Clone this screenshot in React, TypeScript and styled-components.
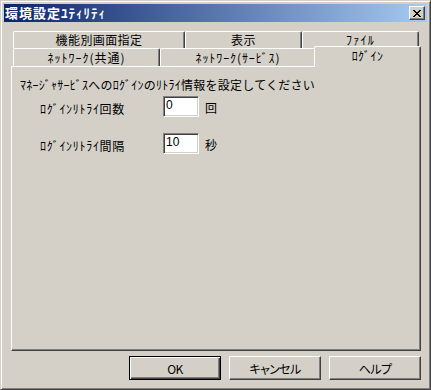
import React from "react";
import styled, { createGlobalStyle } from "styled-components";

const FACE = "#D4D0C8";
const SHADOW = "#808080";
const DARK = "#404040";

const GlobalStyle = createGlobalStyle`
  html, body {
    margin: 0;
    padding: 0;
    background: ${FACE};
  }
  body {
    font-family: "Noto Sans CJK JP", "Liberation Sans", sans-serif;
    font-size: 12px;
    color: #000;
  }
`;

// 半角カナはそのまま (元画面のまま)
const rowOne = [
    { label: "機能別画面指定", w: 172, ls: 0.4 },
    { label: "表示", w: 117, ls: 0.5 },
    { label: "ﾌｧｲﾙ", w: 117, ls: 1.2 },
];

const rowTwo = [
    { label: "ﾈｯﾄﾜｰｸ(共通)", w: 147, ls: 1 },
    { label: "ﾈｯﾄﾜｰｸ(ｻｰﾋﾞｽ)", w: 156, ls: 0.9 },
    { label: "ﾛｸﾞｲﾝ", w: 103, ls: 0.4, active: true },
];

const fields = [
    { label: "ﾛｸﾞｲﾝﾘﾄﾗｲ回数", value: "0", unit: "回" },
    { label: "ﾛｸﾞｲﾝﾘﾄﾗｲ間隔", value: "10", unit: "秒" },
];

const CloseGlyph = () => {
    // classic 8x7 pixel "x"
    const rows = ["xx....xx", ".xx..xx.", "..xxxx..", "...xx...", "..xxxx..", ".xx..xx.", "xx....xx"];
    return (
        <svg width="8" height="7" viewBox="0 0 8 7" shapeRendering="crispEdges">
            {rows.map((r, y) =>
                r.split("").map((c, x) =>
                    c === "x" ? <rect key={`${x}-${y}`} x={x} y={y} width="1" height="1" fill="#000" /> : null
                )
            )}
        </svg>
    );
};

const App = () => {
    return (
        <>
            <GlobalStyle />
            <Window>
                <TitleBar>
                    <Title>環境設定ﾕﾃｨﾘﾃｨ</Title>
                    <CloseButton>
                        <CloseGlyph />
                    </CloseButton>
                </TitleBar>
                <Body>
                    <TabStrip>
                        <TabRow $h={17}>
                            {rowOne.map((t) => (
                                <Tab key={t.label} $w={t.w} $ls={t.ls}>
                                    {t.label}
                                </Tab>
                            ))}
                        </TabRow>
                        <TabRow $h={18}>
                            {rowTwo.map((t) => (
                                <Tab key={t.label} $w={t.w} $ls={t.ls} $active={t.active}>
                                    {t.label}
                                </Tab>
                            ))}
                        </TabRow>
                    </TabStrip>
                    <Panel>
                        <Description>ﾏﾈｰｼﾞｬｻｰﾋﾞｽへのﾛｸﾞｲﾝのﾘﾄﾗｲ情報を設定してください</Description>
                        <FieldGrid>
                            {fields.map((f) => (
                                <React.Fragment key={f.label}>
                                    <FieldLabel>{f.label}</FieldLabel>
                                    <TextBox readOnly value={f.value} />
                                    <Unit>{f.unit}</Unit>
                                </React.Fragment>
                            ))}
                        </FieldGrid>
                    </Panel>
                    <ButtonRow>
                        <Button $default>OK</Button>
                        <Button>キャンセル</Button>
                        <Button>ヘルプ</Button>
                    </ButtonRow>
                </Body>
            </Window>
        </>
    );
};

export default App;

const Window = styled.div`
    width: 431px;
    height: 390px;
    box-sizing: border-box;
    padding: 3px;
    background: ${FACE};
    border: 1px solid;
    border-color: ${FACE} ${DARK} ${DARK} ${FACE};
    box-shadow: inset 1px 1px #fff, inset -1px -1px ${SHADOW};
    display: flex;
    flex-direction: column;
`;

const TitleBar = styled.div`
    height: 18px;
    flex-shrink: 0;
    display: flex;
    align-items: center;
    justify-content: space-between;
    padding: 0 2px 0 1px;
    background: linear-gradient(to right, #0a246a, #a6caf0);
`;

const Title = styled.span`
    color: #fff;
    font-weight: bold;
    font-size: 13px;
    letter-spacing: 1px;
    line-height: 18px;
`;

const CloseButton = styled.div`
    width: 16px;
    height: 14px;
    box-sizing: border-box;
    background: ${FACE};
    border: 1px solid;
    border-color: #fff ${DARK} ${DARK} #fff;
    box-shadow: inset -1px -1px ${SHADOW};
    display: flex;
    align-items: center;
    justify-content: center;
    padding-right: 1px;
`;

const Body = styled.div`
    flex: 1;
    display: flex;
    flex-direction: column;
    padding: 9px 6px 5px 7px;
`;

const TabStrip = styled.div`
    display: flex;
    flex-direction: column;
    margin-left: 2px;
`;

const TabRow = styled.div<{ $h: number }>`
    display: flex;
    height: ${(p) => p.$h}px;
`;

const Tab = styled.div<{ $w: number; $ls: number; $active?: boolean }>`
    box-sizing: border-box;
    background: ${FACE};
    border-top: 1px solid #fff;
    border-left: 1px solid #fff;
    border-right: 1px solid ${DARK};
    border-radius: 2px 2px 0 0;
    box-shadow: inset -1px 0 ${SHADOW};
    display: flex;
    align-items: center;
    justify-content: center;
    font-size: 12px;
    letter-spacing: ${(p) => p.$ls}px;
    line-height: 1;
    white-space: nowrap;
    position: relative;
    z-index: ${(p) => (p.$active ? 1 : 0)};
    margin: ${(p) => (p.$active ? "-2px -2px -1px -2px" : "0")};
    width: ${(p) => (p.$active ? p.$w + 4 : p.$w)}px;
    padding-bottom: ${(p) => (p.$active ? 3 : 0)}px;
`;

const Panel = styled.div`
    height: 285px;
    box-sizing: border-box;
    border: 1px solid;
    border-color: #fff ${DARK} ${DARK} #fff;
    box-shadow: inset -1px -1px ${SHADOW};
    padding: 10px 0 0 8px;
`;

const Description = styled.div`
    font-size: 12px;
    line-height: 16px;
    letter-spacing: 0.25px;
`;

const FieldGrid = styled.div`
    display: grid;
    grid-template-columns: 117px 36px auto;
    grid-auto-rows: 21px;
    column-gap: 6px;
    row-gap: 16px;
    align-items: center;
    margin: 3px 0 0 20px;
`;

const FieldLabel = styled.span`
    font-size: 12px;
    letter-spacing: 0.7px;
    padding-top: 3px;
`;

const Unit = styled.span`
    font-size: 12px;
    padding-top: 2px;
`;

const TextBox = styled.input`
    width: 36px;
    height: 21px;
    box-sizing: border-box;
    margin: 0;
    padding: 0 2px 3px;
    background: #fff;
    border: 1px solid;
    border-color: ${SHADOW} #fff #fff ${SHADOW};
    box-shadow: inset 1px 1px ${DARK}, inset -1px -1px ${FACE};
    font-family: "Liberation Sans", sans-serif;
    font-size: 12px;
    outline: none;
`;

const ButtonRow = styled.div`
    display: flex;
    justify-content: flex-end;
    gap: 8px;
    margin-top: 5px;
`;

const Button = styled.button<{ $default?: boolean }>`
    width: 92px;
    height: 24px;
    box-sizing: border-box;
    margin: 0;
    padding: 0;
    background: ${FACE};
    border: 1px solid;
    border-color: ${(p) => (p.$default ? "#000" : `#fff ${DARK} ${DARK} #fff`)};
    box-shadow: ${(p) =>
        p.$default
            ? `inset 1px 1px #fff, inset -1px -1px ${DARK}, inset -2px -2px ${SHADOW}`
            : `inset -1px -1px ${SHADOW}`};
    font-family: "Noto Sans CJK JP", "Liberation Sans", sans-serif;
    font-size: 12px;
    font-feature-settings: "palt";
    letter-spacing: -0.6px;
    color: #000;
`;
